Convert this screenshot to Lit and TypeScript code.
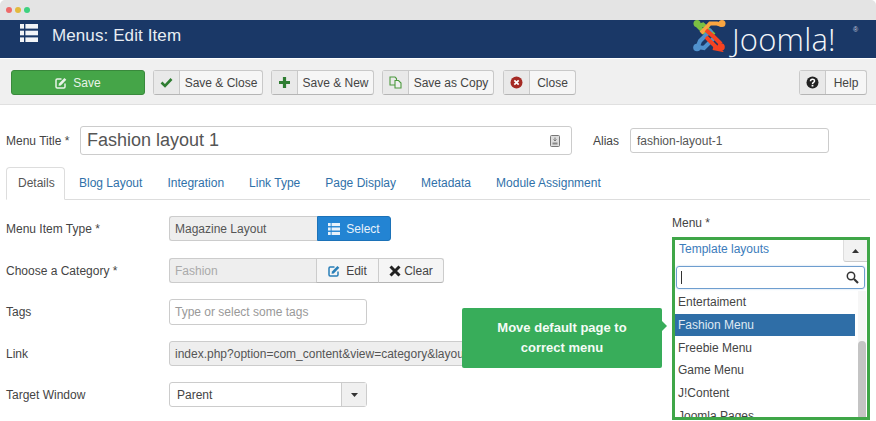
import { LitElement, html, css, svg } from "lit";
import { customElement } from "lit/decorators.js";

const listIcon = (w: number, h: number) => html`<svg width=${w} height=${h} viewBox="0 0 18 18" fill="currentColor"><rect x="0" y="0" width="4" height="4.6"/><rect x="5.4" y="0" width="12.6" height="4.6"/><rect x="0" y="6.7" width="4" height="4.6"/><rect x="5.4" y="6.7" width="12.6" height="4.6"/><rect x="0" y="13.4" width="4" height="4.6"/><rect x="5.4" y="13.4" width="12.6" height="4.6"/></svg>`;
const editIcon = html`<svg width="12" height="12" viewBox="0 0 12 12"><path d="M6.5 2H2.2C1.5 2 1 2.5 1 3.2v6.6c0 .7.5 1.2 1.2 1.2h6.6c.7 0 1.2-.5 1.2-1.2V6.4" fill="none" stroke="currentColor" stroke-width="1.5"/><path d="M4 6.6 9.4.9l1.9 1.8L5.8 8.4l-2.3.4z" fill="currentColor"/></svg>`;
const check = html`<svg width="13" height="11" viewBox="0 0 13 11"><path d="M1.5 5.5 5 9l6.5-7" fill="none" stroke="#2f7d32" stroke-width="2.6"/></svg>`;
const plus = html`<svg width="13" height="13" viewBox="0 0 13 13"><path d="M6.5 1v11M1 6.5h11" stroke="#2f7d32" stroke-width="3.2" fill="none"/></svg>`;
const copy = html`<svg width="13" height="13" viewBox="0 0 13 13" fill="none" stroke="#4d9a3f" stroke-width="1.1"><path d="M1 1h5l1.500 1.500V9H1z"/><path d="M6 4.500h3.500L12 7v5H6z" fill="#f0f0f0"/></svg>`;
const closeIcon = html`<svg width="13" height="13" viewBox="0 0 13 13"><circle cx="6.500" cy="6.500" r="6" fill="#a52a24"/><path d="M4.300 4.300l4.400 4.400M8.700 4.300 4.300 8.700" stroke="#fff" stroke-width="1.700"/></svg>`;
const helpIcon = html`<svg width="13" height="13" viewBox="0 0 13 13"><circle cx="6.500" cy="6.500" r="6" fill="#222"/><path d="M4.500 5.200c0-2.500 4-2.500 4-.2 0 1.500-2 1.400-2 3" fill="none" stroke="#fff" stroke-width="1.500"/><rect x="5.600" y="8.800" width="1.800" height="1.700" fill="#fff"/></svg>`;
const xIcon = html`<svg width="12" height="12" viewBox="0 0 12 12"><path d="M1.500 1.500l9 9M10.500 1.500l-9 9" stroke="#222" stroke-width="3"/></svg>`;
const search = html`<svg width="13" height="13" viewBox="0 0 13 13" fill="none" stroke="#333"><circle cx="5" cy="5" r="3.700" stroke-width="1.500"/><path d="M8 8l4 4" stroke-width="2.200"/></svg>`;
const lockIcon = html`<svg width="10" height="12" viewBox="0 0 10 12"><rect x=".5" y=".5" width="9" height="11" rx="1" fill="#ddd" stroke="#777"/><path d="M5 2.500v3M3.500 4.500 5 6l1.500-1.500" stroke="#777" fill="none"/><rect x="2.500" y="7.500" width="5" height="2" fill="#888"/></svg>`;
const caret = (up = false) => html`<svg width="7" height="4" viewBox="0 0 7 4"><path d=${up ? "M0 4 3.500 0 7 4z" : "M0 0 7 0 3.500 4z"} fill="#333"/></svg>`;

const logo = svg`
  <path d="M5 6 10 4.500 17 11 21 15" stroke="#7ac143" stroke-width="4" fill="none"/>
  <path d="M3.500 4.500 11 12l2 2" stroke="#7ac143" stroke-width="4.200" fill="none"/>
  <circle cx="4" cy="3.500" r="3.500" fill="#7ac143"/>
  <path d="M29 5 24 3.500 17 3.500 11 10 8 13" stroke="#f9a541" stroke-width="4" fill="none"/>
  <circle cx="29" cy="3.500" r="3.500" fill="#f9a541"/>
  <path d="M5 26 7 21 15 13 19 10" stroke="#5091cd" stroke-width="4.200" fill="none"/>
  <path d="M5 27 11 28 17 22 22 17" stroke="#5091cd" stroke-width="4" fill="none"/>
  <circle cx="4" cy="27.500" r="3.800" fill="#5091cd"/>
  <path d="M13 10 21 17 28 24" stroke="#f44321" stroke-width="4.200" fill="none"/>
  <path d="M20 28 25 29 19 23 13 17" stroke="#f44321" stroke-width="4" fill="none"/>
  <circle cx="28" cy="27" r="3.800" fill="#f44321"/>`;

@customElement("app-root")
export class AppRoot extends LitElement {
  static styles = css`
    :host { display: block; width: 876px; height: 421px; overflow: hidden; position: relative; background: #fff;
      font-family: "Liberation Sans", Arial, sans-serif; font-size: 12px; color: #444; }
    * { box-sizing: border-box; }
    .chrome { height: 20px; background: #e4e4e4; display: flex; align-items: center; gap: 3px; padding-left: 6px; border-radius: 5px 5px 0 0; }
    .dot { width: 6px; height: 6px; border-radius: 50%; }
    .header { height: 38px; background: #1a3867; color: #e8edf3; display: flex; align-items: flex-start; padding-left: 20px; position: relative; }
    .hicon { margin-top: 4px; display: flex; color: #f2f4f7; }
    .header h1 { margin: 5px 0 0 14px; font-size: 17px; font-weight: 400; line-height: 22px; letter-spacing: .1px; }
    .logo { position: absolute; left: 693px; top: 0; display: flex; overflow: hidden; height: 32px; }
    .word { position: absolute; left: 732px; top: 0px; font-family: "Open Sans", sans-serif; font-weight: 300; font-size: 31px; line-height: 38px; color: #f4f6f9; letter-spacing: .2px; }
    .reg { position: absolute; left: 853px; top: 5px; font-size: 7px; line-height: 9px; color: #ccd; }
    .toolbar { height: 47px; background: #f0f0f0; border-bottom: 1px solid #e0e0e0; display: flex; align-items: flex-start; padding: 11px 9px 0 11px; border-top: 1px solid #fff; }
    .btn { height: 25px; display: flex; align-items: stretch; background: #f6f6f6; border: 1px solid #c9c9c9; border-bottom-color: #b5b5b5; border-radius: 3px; color: #444; margin-right: 8px; }
    .btn .ic { width: 26px; background: #e9e9e9; border-right: 1px solid #c9c9c9; display: flex; align-items: center; justify-content: center; }
    .btn .tx { flex: 1; display: flex; align-items: center; justify-content: center; }
    .save { width: 134px; background: #45a548; border-color: #39893c; color: #e8f3e8; gap: 6px; justify-content: center; align-items: center; }
    .spacer { flex: 1; }
    .help { margin-right: 0; }
    .main { display: flex; flex-direction: column; padding: 0 6px; }
    .titlerow { display: flex; align-items: center; height: 29px; margin-top: 21px; }
    .tlabel { width: 74px; color: #444; }
    .titleinput { width: 492px; height: 29px; border: 1px solid #ccc; border-radius: 3px; display: flex; align-items: center; justify-content: space-between; padding: 0 11px 0 6px; font-size: 18px; color: #555; }
    .alabel { margin-left: 21px; width: 37px; }
    .alias { width: 199px; height: 25px; border: 1px solid #ccc; border-radius: 3px; display: flex; align-items: center; padding: 0 6px; color: #555; }
    .tabs { display: flex; height: 33px; margin-top: 12px; width: 864px; border-bottom: 1px solid #ddd; }
    .tab { height: 33px; padding: 0 12px; margin-right: 1px; display: flex; align-items: center; color: #3071a9; padding-bottom: 1px; }
    .tab.active { color: #555; background: #fff; border: 1px solid #ddd; border-bottom-color: #fff; border-radius: 4px 4px 0 0; width: 59px; padding: 0 11px 1px; margin-right: 2px; }
    .body { display: flex; margin-top: 16px; }
    .form { width: 667px; display: flex; flex-direction: column; }
    .row { display: flex; align-items: center; height: 25px; margin-bottom: 17px; }
    .row.tight { margin-bottom: 16px; }
    .row > label { width: 163px; }
    .field { height: 25px; display: flex; align-items: center; border: 1px solid #ccc; padding: 0 5px; border-radius: 3px; }
    .ro { background: #eee; color: #555; }
    .g { display: flex; height: 25px; }
    .g .field { border-radius: 3px 0 0 3px; border-right: 0; }
    .sel { width: 74px; background: #2384d3; color: #e8f2fb; border: 1px solid #1c72b8; border-radius: 0 3px 3px 0; display: flex; align-items: center; justify-content: center; gap: 6px; }
    .ed { background: #f5f5f5; border: 1px solid #ccc; border-bottom-color: #b5b5b5; display: flex; align-items: center; justify-content: center; gap: 6px; color: #444; }
    .tags { width: 198px; height: 26px; color: #999; background: #fff; }
    .select { width: 198px; display: flex; height: 25px; border: 1px solid #ccc; border-radius: 3px; align-items: center; justify-content: space-between; color: #444; padding-left: 7px; }
    .select .c { width: 25px; height: 23px; background: #f0f0f0; border-left: 1px solid #ccc; display: flex; align-items: center; justify-content: center; }
    .link { width: 480px; white-space: nowrap; overflow: hidden; }
    .right { width: 198px; display: flex; flex-direction: column; margin-top: 0; }
    .mlabel { height: 21px; line-height: 15px; color: #444; }
    .frame { width: 198px; height: 183px; border: 3px solid #3fa648; position: relative; overflow: hidden; display: flex; flex-direction: column; }
    .top { display: flex; height: 22px; justify-content: space-between; }
    .top span { color: #3b7cbb; margin: 2px 0 0 4px; line-height: 15px; }
    .top .c { width: 24px; height: 22px; background: #f2f2f2; border-left: 1px solid #ddd; border-bottom: 1px solid #ccc; border-radius: 0 0 0 3px; display: flex; align-items: center; justify-content: center; }
    .search { margin: 4px 5px 0 1px; width: 189px; height: 23px; border: 1px solid #6e9ecf; border-radius: 3px; display: flex; align-items: center; justify-content: space-between; padding: 0 5px 0 4px; box-shadow: 0 0 2px rgba(80,140,200,.4); flex: none; }
    .cursor { width: 1px; height: 13px; background: #333; }
    .listwrap { display: flex; margin-top: 2px; flex: 1; min-height: 0; }
    .list { width: 180px; flex: none; }
    .item { height: 22.7px; display: flex; align-items: center; padding-left: 3px; color: #444; }
    .item.on { background: #2f6ea7; color: #dfe9f3; height: 22px; margin-top: .4px; margin-bottom: .3px; }
    .track { width: 8px; margin-left: 3px; background: #f6f6f6; position: relative; }
    .thumb { position: absolute; left: 0; right: 0; top: 50px; bottom: 0; background: #c4c4c4; border-radius: 4px 4px 0 0; }
    .tip { position: absolute; left: 462px; top: 308px; width: 200px; height: 60px; background: #38ad5a; color: #f4fbf6; border-radius: 2px; font-weight: 700; font-size: 13px; line-height: 20px; display: flex; align-items: center; justify-content: center; text-align: center; }
    .tip::after { content: ""; position: absolute; left: 200px; top: 13px; border: 5.500px solid transparent; border-left-color: #38ad5a; }
  `;

  render() {
    return html`
      <div class="chrome">
        <span class="dot" style="background:#ee6a6a"></span><span class="dot" style="background:#e3b93c"></span><span class="dot" style="background:#3ed17f"></span>
      </div>
      <div class="header">
        <span class="hicon">${listIcon(18, 18)}</span>
        <h1>Menus: Edit Item</h1>
        <svg class="logo" width="34" height="32" viewBox="0 0 34 32">${logo}</svg>
        <span class="word">Joomla!</span><span class="reg">®</span>
      </div>
      <div class="toolbar">
        <div class="btn save">${editIcon}<span>Save</span></div>
        <div class="btn" style="width:110px"><span class="ic">${check}</span><span class="tx">Save &amp; Close</span></div>
        <div class="btn" style="width:103px"><span class="ic">${plus}</span><span class="tx">Save &amp; New</span></div>
        <div class="btn" style="width:112px;margin-right:9px"><span class="ic">${copy}</span><span class="tx">Save as Copy</span></div>
        <div class="btn" style="width:73px"><span class="ic">${closeIcon}</span><span class="tx">Close</span></div>
        <span class="spacer"></span>
        <div class="btn help" style="width:68px"><span class="ic">${helpIcon}</span><span class="tx">Help</span></div>
      </div>
      <div class="main">
        <div class="titlerow">
          <span class="tlabel">Menu Title *</span>
          <div class="titleinput"><span>Fashion layout 1</span>${lockIcon}</div>
          <span class="alabel">Alias</span>
          <div class="alias">fashion-layout-1</div>
        </div>
        <div class="tabs">
          ${["Details", "Blog Layout", "Integration", "Link Type", "Page Display", "Metadata", "Module Assignment"].map(
            (t, i) => html`<div class="tab ${i === 0 ? "active" : ""}">${t}</div>`
          )}
        </div>
        <div class="body">
          <div class="form">
            <div class="row">
              <label>Menu Item Type *</label>
              <div class="g"><div class="field ro" style="width:148px">Magazine Layout</div><div class="sel">${listIcon(12, 12)}<span>Select</span></div></div>
            </div>
            <div class="row tight">
              <label>Choose a Category *</label>
              <div class="g"><div class="field ro" style="width:147px;color:#aaa">Fashion</div><div class="ed" style="width:63px"><span style="color:#2a7fb8;display:flex">${editIcon}</span><span>Edit</span></div><div class="ed" style="width:65px;border-left:0;border-radius:0 3px 3px 0;gap:3px">${xIcon}<span>Clear</span></div></div>
            </div>
            <div class="row">
              <label>Tags</label>
              <div class="field tags">Type or select some tags</div>
            </div>
            <div class="row tight">
              <label>Link</label>
              <div class="field ro link">index.php?option=com_content&amp;view=category&amp;layout=blog&amp;id=12</div>
            </div>
            <div class="row">
              <label>Target Window</label>
              <div class="select"><span>Parent</span><span class="c">${caret()}</span></div>
            </div>
          </div>
          <div class="right">
            <div class="mlabel">Menu *</div>
            <div class="frame">
              <div class="top"><span>Template layouts</span><div class="c">${caret(true)}</div></div>
              <div class="search"><span class="cursor"></span>${search}</div>
              <div class="listwrap">
                <div class="list">
                  ${["Entertaiment", "Fashion Menu", "Freebie Menu", "Game Menu", "J!Content", "Joomla Pages"].map(
                    (t, i) => html`<div class="item ${i === 1 ? "on" : ""}">${t}</div>`
                  )}
                </div>
                <div class="track"><div class="thumb"></div></div>
              </div>
            </div>
          </div>
        </div>
      </div>
      <div class="tip">Move default page to<br />correct menu</div>
    `;
  }
}
